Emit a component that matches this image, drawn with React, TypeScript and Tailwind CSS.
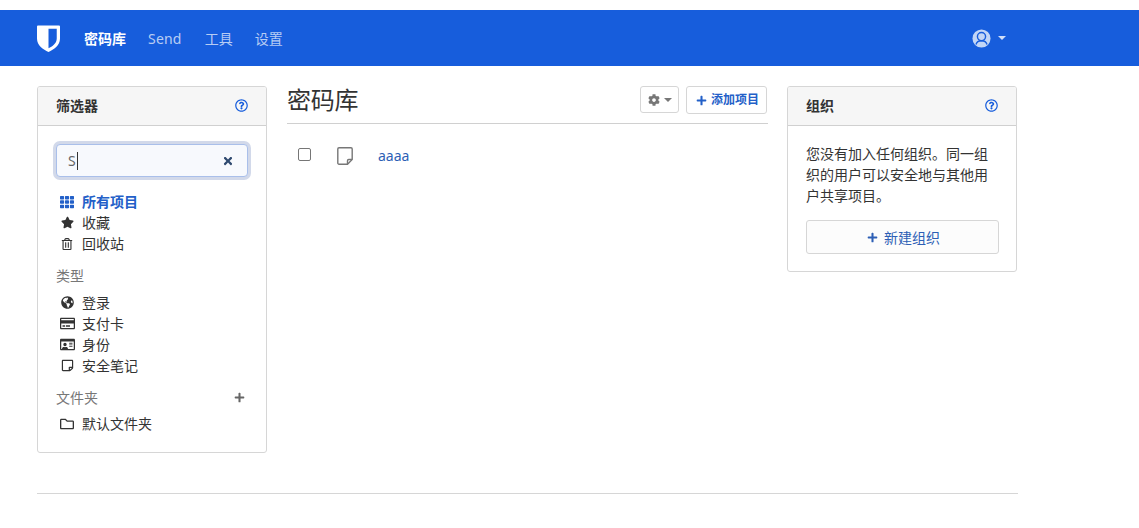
import {
  FaCog,
  FaGlobeAmericas,
  FaPlus,
  FaRegCreditCard,
  FaRegFolder,
  FaRegIdCard,
  FaRegQuestionCircle,
  FaRegStickyNote,
  FaRegTrashAlt,
  FaStar,
  FaTh,
  FaTimes
} from 'react-icons/fa'
import type { ReactNode } from 'react'

const FONT = "font-['Noto_Sans','Noto_Sans_CJK_SC',sans-serif]"

const Caret = ({ className }: { className: string }) => (
  <span className={`h-0 w-0 border-x-[4px] border-t-[4px] border-x-transparent ${className}`} />
)

const Shield = () => (
  <svg viewBox="0 0 24 28" className="h-[27px] w-[23px]" fill="#fff">
    <path
      fillRule="evenodd"
      d="M1 0.5h22a1 1 0 0 1 1 1V14c0 7.5-6.5 11.5-12 14C6.500 25.500 0 21.500 0 14V1.500a1 1 0 0 1 1-1zM12 3.800V24.300c4-2 8.600-5 8.600-10.300V3.800z"
    />
  </svg>
)

const UserIcon = () => (
  <svg viewBox="0 0 20 20" className="h-[19px] w-[19px]">
    <circle cx="10" cy="10" r="9.500" fill="#c3d6f6" />
    <circle cx="10" cy="8" r="4.300" fill="#c3d6f6" stroke="#175ddc" strokeWidth="1.500" />
    <path d="M4.200 16.300c.8-3 3-4 5.800-4s5 1 5.800 4" fill="none" stroke="#175ddc" strokeWidth="1.500" />
  </svg>
)

const NoteIcon = () => (
  <svg viewBox="0 0 16 18" className="ml-[26px] h-[18px] w-[16px] translate-y-[1px]" fill="none" stroke="#777" strokeWidth="1.400">
    <path d="M2 0.800h12a1.200 1.200 0 0 1 1.200 1.200v10.500l-4.700 4.700H2a1.200 1.200 0 0 1-1.200-1.200V2A1.200 1.200 0 0 1 2 0.800z" />
    <path d="M15 12.500h-3.300a1.200 1.200 0 0 0-1.200 1.200V17" />
  </svg>
)

const CardHeader = ({ title }: { title: string }) => (
  <div className="flex h-[39px] items-center justify-between border-b border-[#d0d0d0] bg-[#f6f6f6] px-[18px] pb-[1px] text-[14px] font-semibold text-[#333]">
    <span>{title}</span>
    <FaRegQuestionCircle className="text-[13px] text-[#175ddc]" />
  </div>
)

const FilterRow = ({
  icon,
  label,
  active = false
}: {
  icon: ReactNode
  label: string
  active?: boolean
}) => (
  <div
    className={`flex h-[21px] items-center text-[14px] ${
      active ? 'font-semibold text-[#2360c8]' : 'text-[#333]'
    }`}
  >
    <span className="flex w-[26px] shrink-0 justify-center pr-[4px] text-[14px]">{icon}</span>
    <span>{label}</span>
  </div>
)

export default function App() {
  return (
    <div className={`min-h-[528px] overflow-hidden bg-white pt-[10px] ${FONT}`}>
      <nav className="flex h-[56px] items-center bg-[#175ddc] pl-[37px] pr-[133px]">
        <Shield />
        <div className="ml-[24px] flex items-center gap-[22px] text-[14px] text-white/70">
          <span className="font-semibold text-white">密码库</span>
          <span className="mr-[1px] tracking-[0.2px]">Send</span>
          <span>工具</span>
          <span>设置</span>
        </div>
        <div className="ml-auto flex items-center gap-[7px]">
          <UserIcon />
          <Caret className="border-t-white/80" />
        </div>
      </nav>

      <main className="ml-[37px] mt-[20px] flex w-[981px] items-start">
        <aside className="h-[367px] w-[230px] shrink-0 overflow-hidden rounded-[3px] border border-[#d6d6d6]">
          <CardHeader title="筛选器" />
          <div className="px-[18px] pt-[18px]">
            <div className="flex h-[33px] items-center justify-between rounded-[4px] border border-[#a9bfea] bg-[#f7f9fd] pl-[11px] pr-[13px] text-[14px] text-[#666] shadow-[0_0_0_3px_#d2d9ea]">
              <span className="border-r border-[#333] pr-[1px] leading-[18px]">S</span>
              <FaTimes className="text-[12px] text-[#2f4a70]" />
            </div>
            <div className="mt-[14px]">
              <FilterRow active icon={<FaTh className="text-[14px]" />} label="所有项目" />
              <FilterRow icon={<FaStar className="text-[13px]" />} label="收藏" />
              <FilterRow icon={<FaRegTrashAlt className="text-[12px]" />} label="回收站" />
            </div>
            <div className="mt-[11px] text-[14px] leading-[21px] text-[#777]">类型</div>
            <div className="mt-[6px]">
              <FilterRow icon={<FaGlobeAmericas className="text-[13px]" />} label="登录" />
              <FilterRow icon={<FaRegCreditCard className="text-[15px]" />} label="支付卡" />
              <FilterRow icon={<FaRegIdCard className="text-[15px]" />} label="身份" />
              <FilterRow icon={<FaRegStickyNote className="text-[13px]" />} label="安全笔记" />
            </div>
            <div className="mt-[11px] flex items-center justify-between text-[14px] leading-[21px] text-[#777]">
              <span>文件夹</span>
              <FaPlus className="mr-[3px] text-[11px] text-[#666]" />
            </div>
            <div className="mt-[5px]">
              <FilterRow icon={<FaRegFolder className="text-[14px]" />} label="默认文件夹" />
            </div>
          </div>
        </aside>

        <section className="ml-[20px] w-[481px] shrink-0">
          <div className="flex h-[38px] items-start justify-between border-b border-[#d0d0d0]">
            <h1 className="text-[24px] leading-[28px] tracking-[-0.2px] text-[#333]">密码库</h1>
            <div className="flex items-start gap-[7px] pr-[1px]">
              <button
                type="button"
                className="flex h-[27px] w-[39px] items-center justify-center gap-[4px] rounded-[3px] border border-[#d6d6d6] text-[#777]"
              >
                <FaCog className="text-[12px]" />
                <Caret className="border-x-[3px] border-t-[3px] border-t-[#777]" />
              </button>
              <button
                type="button"
                className="flex h-[28px] w-[81px] items-center justify-center gap-[4px] rounded-[3px] border border-[#d6d6d6] pl-[2px] text-[12px] font-semibold text-[#2360c8]"
              >
                <FaPlus className="text-[11px]" />
                添加项目
              </button>
            </div>
          </div>
          <div className="flex h-[62px] items-center text-[14px]">
            <input
              type="checkbox"
              readOnly
              className="ml-[11px] h-[13px] w-[13px] -translate-y-[1px] appearance-none rounded-[2px] border border-[#767676] bg-white"
            />
            <NoteIcon />
            <span className="ml-[25px] text-[#2d5fb5]">aaaa</span>
          </div>
        </section>

        <aside className="ml-[19px] h-[186px] w-[230px] shrink-0 overflow-hidden rounded-[3px] border border-[#d6d6d6]">
          <CardHeader title="组织" />
          <div className="pl-[18px] pr-[17px] pt-[18px]">
            <p className="w-[192px] text-[14px] leading-[20.800px] text-[#333]">
              您没有加入任何组织。同一组织的用户可以安全地与其他用户共享项目。
            </p>
            <button
              type="button"
              className="mt-[13.600px] flex h-[34px] w-full items-center justify-center gap-[6px] rounded-[3px] border border-[#d6d6d6] bg-[#fcfcfc] pl-[2px] pt-[1px] text-[14px] text-[#2d5fb5]"
            >
              <FaPlus className="text-[11px]" />
              新建组织
            </button>
          </div>
        </aside>
      </main>

      <hr className="ml-[37px] mt-[40px] w-[981px] border-[#d6d6d6]" />
    </div>
  )
}
